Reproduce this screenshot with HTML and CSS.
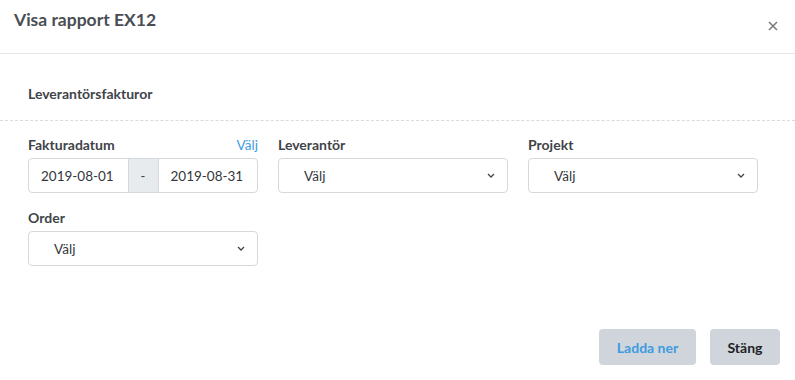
FILE: index.html
```html
<!DOCTYPE html>
<html lang="sv">
<head>
<meta charset="utf-8">
<title>Visa rapport EX12</title>
<link rel="stylesheet" href="styles.css">
</head>
<body>
<div class="modal">
  <header class="modal-header">
    <h1 class="modal-title">Visa rapport EX12</h1>
    <button class="close" aria-label="Stäng">
      <svg width="10" height="10" viewBox="0 0 10 10"><path d="M1 1L9 9M9 1L1 9" stroke="#777" stroke-width="1.5" fill="none"/></svg>
    </button>
  </header>
  <div class="section-title">Leverantörsfakturor</div>
  <div class="fields">
    <div class="field">
      <div class="label-row"><span class="label">Fakturadatum</span><a class="link">Välj</a></div>
      <div class="daterange">
        <div class="date">2019-08-01</div>
        <div class="sep">-</div>
        <div class="date">2019-08-31</div>
      </div>
    </div>
    <div class="field">
      <div class="label-row"><span class="label">Leverantör</span></div>
      <div class="select"><span>Välj</span><svg class="chev" width="8" height="5" viewBox="0 0 8 5"><path d="M1 1L4 4L7 1" stroke="#444" stroke-width="1.3" fill="none"/></svg></div>
    </div>
    <div class="field">
      <div class="label-row"><span class="label">Projekt</span></div>
      <div class="select"><span>Välj</span><svg class="chev" width="8" height="5" viewBox="0 0 8 5"><path d="M1 1L4 4L7 1" stroke="#444" stroke-width="1.3" fill="none"/></svg></div>
    </div>
    <div class="field">
      <div class="label-row"><span class="label">Order</span></div>
      <div class="select"><span>Välj</span><svg class="chev" width="8" height="5" viewBox="0 0 8 5"><path d="M1 1L4 4L7 1" stroke="#444" stroke-width="1.3" fill="none"/></svg></div>
    </div>
  </div>
  <footer class="modal-footer">
    <button class="btn btn-primary">Ladda ner</button>
    <button class="btn btn-close">Stäng</button>
  </footer>
</div>
</body>
</html>
```
FILE: styles.css
```css
html, body {
  margin: 0;
  padding: 0;
  background: #fff;
}
body {
  font-family: "Lato", "Liberation Sans", sans-serif;
  color: #3c4046;
}
.modal {
  width: 795px;
  height: 380px;
  box-sizing: border-box;
  display: flex;
  flex-direction: column;
}
.modal-header {
  height: 54px;
  box-sizing: border-box;
  border-bottom: 1px solid #e6e6e6;
  display: flex;
  align-items: flex-start;
  justify-content: space-between;
  padding: 9px 17px 0 14px;
}
.modal-title {
  margin: 0;
  font-size: 17.5px;
  font-weight: 700;
  line-height: 22px;
  color: #4a4e54;
}
.close {
  border: 0;
  background: none;
  padding: 0;
  margin-top: 12px;
  width: 10px;
  height: 10px;
  display: flex;
}
.section-title {
  padding: 31px 28px 0;
  height: 67px;
  box-sizing: border-box;
  border-bottom: 1px dashed #dadada;
  font-size: 14px;
  font-weight: 700;
  line-height: 18px;
  color: #3f444a;
}
.fields {
  display: grid;
  grid-template-columns: repeat(3, 230px);
  column-gap: 20px;
  row-gap: 16px;
  padding: 15px 28px 0;
}
.label-row {
  display: flex;
  justify-content: space-between;
  align-items: baseline;
  height: 18px;
  margin-bottom: 4px;
}
.label {
  font-size: 14px;
  font-weight: 700;
  line-height: 18px;
  color: #3f444a;
}
.link {
  font-size: 13.5px;
  color: #3d9be0;
  line-height: 18px;
}
.daterange {
  display: flex;
  height: 35px;
  box-sizing: border-box;
  border: 1px solid #d5d8dc;
  border-radius: 4px;
  overflow: hidden;
}
.date {
  flex: 1;
  display: flex;
  align-items: center;
  padding-left: 12px;
  font-size: 13.5px;
  color: #33373c;
}
.sep {
  width: 29px;
  flex: none;
  background: #e8ebee;
  border-left: 1px solid #d5d8dc;
  border-right: 1px solid #d5d8dc;
  display: flex;
  align-items: center;
  justify-content: center;
  font-size: 13px;
  color: #444;
}
.select {
  height: 35px;
  box-sizing: border-box;
  border: 1px solid #d5d8dc;
  border-radius: 4px;
  display: flex;
  align-items: center;
  justify-content: space-between;
  padding: 0 12px 0 25px;
  font-size: 13.5px;
  color: #33373c;
}
.chev {
  display: block;
}
.modal-footer {
  margin-top: auto;
  display: flex;
  justify-content: flex-end;
  gap: 14px;
  padding: 0 15px 15px;
}
.btn {
  height: 36px;
  border: 0;
  border-radius: 4px;
  background: #d0d5dc;
  font-family: inherit;
  font-size: 14px;
  font-weight: 700;
  color: #1e2226;
  padding: 0;
}
.btn-primary {
  color: #3d9be0;
  width: 97px;
}
.btn-close {
  width: 70px;
}
```
